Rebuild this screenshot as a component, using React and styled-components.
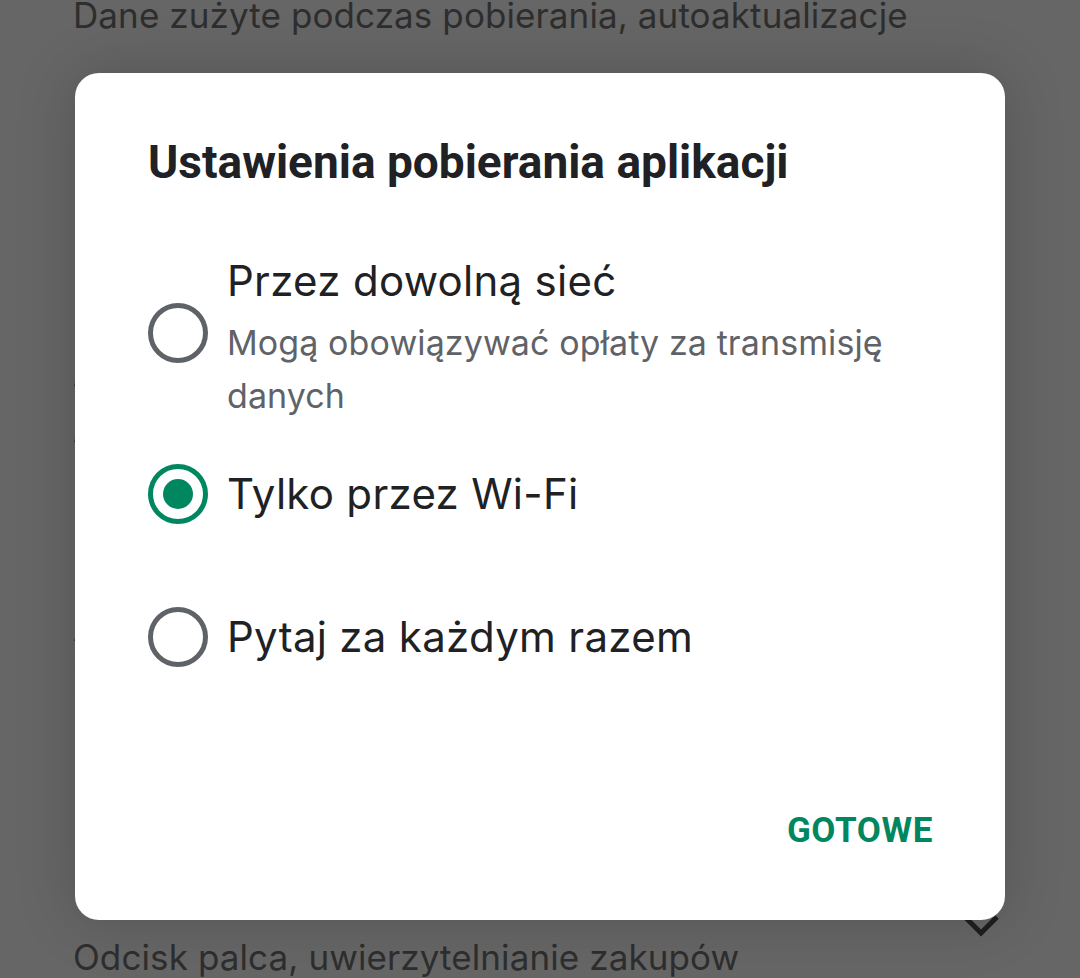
import React, { useState } from 'react'
import styled, { createGlobalStyle } from 'styled-components'

const GlobalStyle = createGlobalStyle`
  html, body {
    margin: 0;
    padding: 0;
    background: #666666;
    overflow: hidden;
  }
  * {
    box-sizing: border-box;
  }
`

const Page = styled.div`
  width: 1080px;
  height: 978px;
  position: relative;
  overflow: hidden;
  background: #666666;
  font-family: 'Inter', 'Roboto', sans-serif;
  color: #2c2c2c;
`

const Settings = styled.div`
  display: flex;
  flex-direction: column;
  padding: 0 80px 0 73px;
`

const SettingItem = styled.div`
  display: flex;
  flex-direction: column;
  padding: ${props => props.pad || '0'};
`

const SectionRow = styled.div`
  display: flex;
  align-items: center;
  justify-content: space-between;
  padding: ${props => props.pad || '0'};
`

const SettingTitle = styled.div`
  font-size: 36px;
  line-height: ${props => props.lh || '50px'};
  color: #2a2a2a;
  white-space: nowrap;
`

const SettingText = styled.div`
  font-size: 35px;
  line-height: 46px;
  color: #2e2e2e;
  letter-spacing: 0.1px;
  white-space: nowrap;
  margin-top: ${props => props.top || '0'};
`

const Chevron = styled.svg`
  flex: none;
  width: 40px;
  height: 24px;
  margin-right: -1px;
  margin-top: 5px;
`

const Dialog = styled.div`
  position: absolute;
  left: 75px;
  top: 73px;
  width: 930px;
  height: 847px;
  background: #ffffff;
  border-radius: 24px;
  box-shadow: 0 0 60px rgba(0, 0, 0, 0.18);
  display: flex;
  flex-direction: column;
  padding: 63px 72px 0 73px;
`

const DialogTitle = styled.h2`
  margin: 0;
  font-family: 'Roboto', 'Liberation Sans', sans-serif;
  font-weight: 700;
  font-size: 46px;
  line-height: 52px;
  color: #202124;
`

const Options = styled.div`
  display: flex;
  flex-direction: column;
  margin-top: 67px;
`

const Option = styled.label`
  display: flex;
  align-items: center;
  gap: 17px;
  min-height: 143px;
  cursor: pointer;
  &:first-child {
    min-height: 0;
  }
`

const Radio = styled.span`
  flex: none;
  width: 60px;
  height: 60px;
  border-radius: 50%;
  border: 5px solid ${props => (props.checked ? '#01875f' : '#5f6368')};
  display: flex;
  align-items: center;
  justify-content: center;
  margin-bottom: ${props => props.shift || '0'};
  margin-right: 2px;
  &::after {
    content: '';
    width: 30px;
    height: 30px;
    border-radius: 50%;
    background: #01875f;
    display: ${props => (props.checked ? 'block' : 'none')};
  }
`

const OptionText = styled.div`
  display: flex;
  flex-direction: column;
`

const OptionLabel = styled.div`
  font-family: 'Inter', 'Open Sans', sans-serif;
  font-size: 42px;
  line-height: 52px;
  letter-spacing: 0.3px;
  color: #202124;
`

const OptionHint = styled.div`
  font-family: 'Inter', 'Open Sans', sans-serif;
  font-size: 34px;
  line-height: 53px;
  letter-spacing: 0.1px;
  color: #5f6368;
  margin-top: 9px;
`

const Footer = styled.div`
  margin-top: auto;
  display: flex;
  justify-content: flex-end;
  padding-bottom: 65px;
`

const DoneButton = styled.button`
  border: none;
  background: none;
  padding: 0;
  font-family: 'Roboto', 'Liberation Sans', sans-serif;
  font-weight: 700;
  font-size: 35px;
  line-height: 48px;
  letter-spacing: 0.6px;
  color: #01875f;
  cursor: pointer;
`

const options = [
  {
    id: 'any',
    label: 'Przez dowolną sieć',
    hint: 'Mogą obowiązywać opłaty za transmisję danych',
  },
  { id: 'wifi', label: 'Tylko przez Wi-Fi' },
  { id: 'ask', label: 'Pytaj za każdym razem' },
]

const App = () => {
  const [selected, setSelected] = useState('wifi')

  return (
    <Page>
      <GlobalStyle />
      <Settings>
        <SettingText top="-8px">Dane zużyte podczas pobierania, autoaktualizacje</SettingText>
        <SettingItem pad="310px 0 0 0">
          <SettingTitle>Automatyczna aktualizacja aplikacji</SettingTitle>
          <SettingText top="8px">Aktualizuj aplikacje tylko przez Wi-Fi</SettingText>
          <SettingText>Używaj zawsze</SettingText>
        </SettingItem>
        <SettingItem pad="105px 0 0 0">
          <SettingTitle>Automatycznie odtwarzaj filmy</SettingTitle>
          <SettingText>Zawsze</SettingText>
        </SettingItem>
        <SectionRow pad="167px 0 0 0">
          <SettingItem>
            <SettingTitle lh="44px">Uwierzytelnianie</SettingTitle>
            <SettingText top="24px">Odcisk palca, uwierzytelnianie zakupów</SettingText>
          </SettingItem>
          <Chevron viewBox="0 0 40 24">
            <path d="M4 3 L20 19 L36 3" fill="none" stroke="#1f1f1f" strokeWidth="5" />
          </Chevron>
        </SectionRow>
      </Settings>

      <Dialog role="dialog">
        <DialogTitle>Ustawienia pobierania aplikacji</DialogTitle>
        <Options>
          {options.map(opt => (
            <Option key={opt.id} onClick={() => setSelected(opt.id)}>
              <Radio checked={selected === opt.id} shift={opt.hint ? '12px' : '0'} />
              <OptionText>
                <OptionLabel>{opt.label}</OptionLabel>
                {opt.hint && <OptionHint>{opt.hint}</OptionHint>}
              </OptionText>
            </Option>
          ))}
        </Options>
        <Footer>
          <DoneButton>GOTOWE</DoneButton>
        </Footer>
      </Dialog>
    </Page>
  )
}

export default App
